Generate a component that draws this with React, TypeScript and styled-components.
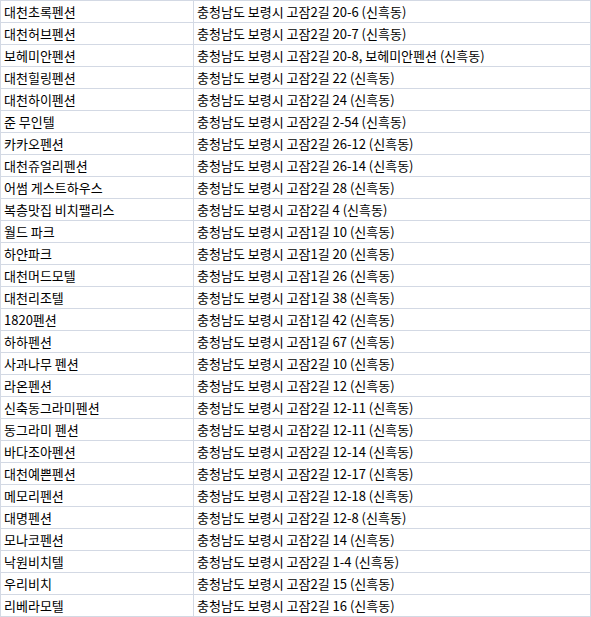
import React from 'react';
import styled, { createGlobalStyle } from 'styled-components';

const GlobalStyle = createGlobalStyle`
  html, body {
    margin: 0;
    padding: 0;
    background: #ffffff;
  }
  body {
    font-family: "Noto Sans CJK KR", "Noto Sans", sans-serif;
  }
`;

const Table = styled.table`
  width: 591px;
  border-collapse: collapse;
  table-layout: fixed;
  font-size: 13px;
  color: #000;
`;

const Cell = styled.td<{ $width?: number }>`
  width: ${props => (props.$width ? `${props.$width}px` : 'auto')};
  height: 21px;
  padding: 0 3px;
  border: 1px solid #d3d9e4;
  white-space: nowrap;
  overflow: hidden;
  vertical-align: middle;
  line-height: 20px;
`;

const rows: [string, string][] = [
  ['대천초록펜션', '충청남도 보령시 고잠2길 20-6 (신흑동)'],
  ['대천허브펜션', '충청남도 보령시 고잠2길 20-7 (신흑동)'],
  ['보헤미안펜션', '충청남도 보령시 고잠2길 20-8, 보헤미안펜션 (신흑동)'],
  ['대천힐링펜션', '충청남도 보령시 고잠2길 22 (신흑동)'],
  ['대천하이펜션', '충청남도 보령시 고잠2길 24 (신흑동)'],
  ['준 무인텔', '충청남도 보령시 고잠2길 2-54 (신흑동)'],
  ['카카오펜션', '충청남도 보령시 고잠2길 26-12 (신흑동)'],
  ['대천쥬얼리펜션', '충청남도 보령시 고잠2길 26-14 (신흑동)'],
  ['어썸 게스트하우스', '충청남도 보령시 고잠2길 28 (신흑동)'],
  ['복층맛집 비치팰리스', '충청남도 보령시 고잠2길 4 (신흑동)'],
  ['월드 파크', '충청남도 보령시 고잠1길 10 (신흑동)'],
  ['하얀파크', '충청남도 보령시 고잠1길 20 (신흑동)'],
  ['대천머드모텔', '충청남도 보령시 고잠1길 26 (신흑동)'],
  ['대천리조텔', '충청남도 보령시 고잠1길 38 (신흑동)'],
  ['1820펜션', '충청남도 보령시 고잠1길 42 (신흑동)'],
  ['하하펜션', '충청남도 보령시 고잠1길 67 (신흑동)'],
  ['사과나무 펜션', '충청남도 보령시 고잠2길 10 (신흑동)'],
  ['라온펜션', '충청남도 보령시 고잠2길 12 (신흑동)'],
  ['신축동그라미펜션', '충청남도 보령시 고잠2길 12-11 (신흑동)'],
  ['동그라미 펜션', '충청남도 보령시 고잠2길 12-11 (신흑동)'],
  ['바다조아펜션', '충청남도 보령시 고잠2길 12-14 (신흑동)'],
  ['대천예쁜펜션', '충청남도 보령시 고잠2길 12-17 (신흑동)'],
  ['메모리펜션', '충청남도 보령시 고잠2길 12-18 (신흑동)'],
  ['대명펜션', '충청남도 보령시 고잠2길 12-8 (신흑동)'],
  ['모나코펜션', '충청남도 보령시 고잠2길 14 (신흑동)'],
  ['낙원비치텔', '충청남도 보령시 고잠2길 1-4 (신흑동)'],
  ['우리비치', '충청남도 보령시 고잠2길 15 (신흑동)'],
  ['리베라모텔', '충청남도 보령시 고잠2길 16 (신흑동)'],
];

export default function App() {
  return (
    <>
      <GlobalStyle />
      <Table>
        <tbody>
          {rows.map(([name, address]) => (
            <tr key={name + address}>
              <Cell $width={186}>{name}</Cell>
              <Cell>{address}</Cell>
            </tr>
          ))}
        </tbody>
      </Table>
    </>
  );
}
